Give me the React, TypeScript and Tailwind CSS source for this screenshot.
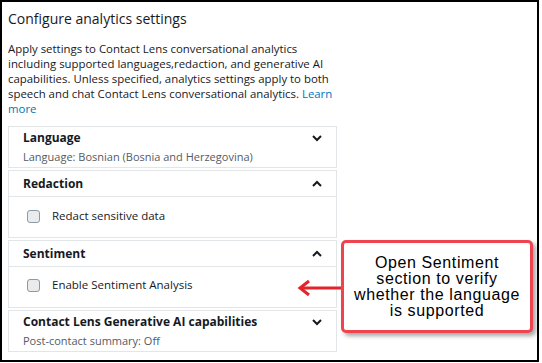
const font = { fontFamily: '"Open Sans", "Noto Sans", sans-serif' };

function Chevron({ up }: { up?: boolean }) {
  return (
    <svg width="10" height="7" viewBox="0 0 10 7" className="shrink-0">
      <polyline
        points={up ? '1,6 5,2 9,6' : '1,1 5,5 9,1'}
        fill="none"
        stroke="#16191f"
        strokeWidth="2"
      />
    </svg>
  );
}

function Checkbox({ label }: { label: string }) {
  return (
    <div className="flex items-center h-[14px]">
      <div className="w-[13px] h-[13px] rounded-[3px] border border-[#8d99a8] bg-[#e9ebed] ml-[18px]" />
      <span className="ml-[12px] text-[11.5px] text-[#16191f]">{label}</span>
    </div>
  );
}

export default function App() {
  return (
    <div
      className="relative w-[539px] h-[362px] border-2 border-black bg-white text-[#16191f] overflow-hidden"
      style={font}
    >
      <div className="pl-[6px] pt-[7px] w-[337px]">
        <h2 className="text-[14px] leading-[20px]">Configure analytics settings</h2>
        <p className="mt-[12px] text-[11.4px] leading-[15px] w-[335px] whitespace-nowrap">
          Apply settings to Contact Lens conversational analytics
          <br />
          including supported languages,redaction, and generative AI
          <br />
          capabilities. Unless specified, analytics settings apply to both
          <br />
          speech and chat Contact Lens conversational analytics. <span className="text-[#0073bb]">Learn</span>
          <br />
          <span className="text-[#0073bb]">more</span>
        </p>

        <div className="mt-[10px] flex flex-col gap-[2px] w-[329px]">
          <div className="border border-[#e3e6e8] h-[42px] px-[14px] pt-[2px]">
            <div className="flex items-center justify-between h-[18px]">
              <span className="text-[12px] font-bold">Language</span>
              <Chevron />
            </div>
            <div className="text-[11px] text-[#545b64] mt-[1px] leading-[18px]">
              Language: Bosnian (Bosnia and Herzegovina)
            </div>
          </div>

          <div className="border border-[#e3e6e8] h-[68px]">
            <div className="flex items-center justify-between h-[26px] px-[14px] border-b border-[#e3e6e8]">
              <span className="text-[12px] font-bold">Redaction</span>
              <Chevron up />
            </div>
            <div className="pt-[12px]">
              <Checkbox label="Redact sensitive data" />
            </div>
          </div>

          <div className="border border-[#e3e6e8] h-[68px]">
            <div className="flex items-center justify-between h-[26px] px-[14px] border-b border-[#e3e6e8]">
              <span className="text-[12px] font-bold">Sentiment</span>
              <Chevron up />
            </div>
            <div className="pt-[11px]">
              <Checkbox label="Enable Sentiment Analysis" />
            </div>
          </div>

          <div className="border border-[#e3e6e8] h-[42px] px-[14px] pt-[2px]">
            <div className="flex items-center justify-between h-[18px]">
              <span className="text-[12px] font-bold">Contact Lens Generative AI capabilities</span>
              <Chevron />
            </div>
            <div className="text-[11px] text-[#545b64] mt-[1px] leading-[18px]">Post-contact summary: Off</div>
          </div>
        </div>
      </div>

      <svg className="absolute left-[294px] top-[276px]" width="50" height="20" viewBox="0 0 50 20">
        <line x1="4" y1="10" x2="48" y2="10" stroke="#e3242b" strokeWidth="3" />
        <polyline points="13,3 4,10 13,17" fill="none" stroke="#e3242b" strokeWidth="3" />
      </svg>

      <div
        className="absolute left-[339px] top-[238px] w-[192px] h-[93px] border-[3px] border-[#ef4450] rounded-[5px] bg-white shadow-[3px_3px_4px_rgba(0,0,0,0.35)] flex items-center justify-center text-center text-[16px] leading-[16px] tracking-[0.6px] text-black"
        style={{ fontFamily: '"Liberation Sans", Arial, sans-serif' }}
      >
        Open Sentiment
        <br />
        section to verify
        <br />
        whether the language
        <br />
        is supported
      </div>
    </div>
  );
}
